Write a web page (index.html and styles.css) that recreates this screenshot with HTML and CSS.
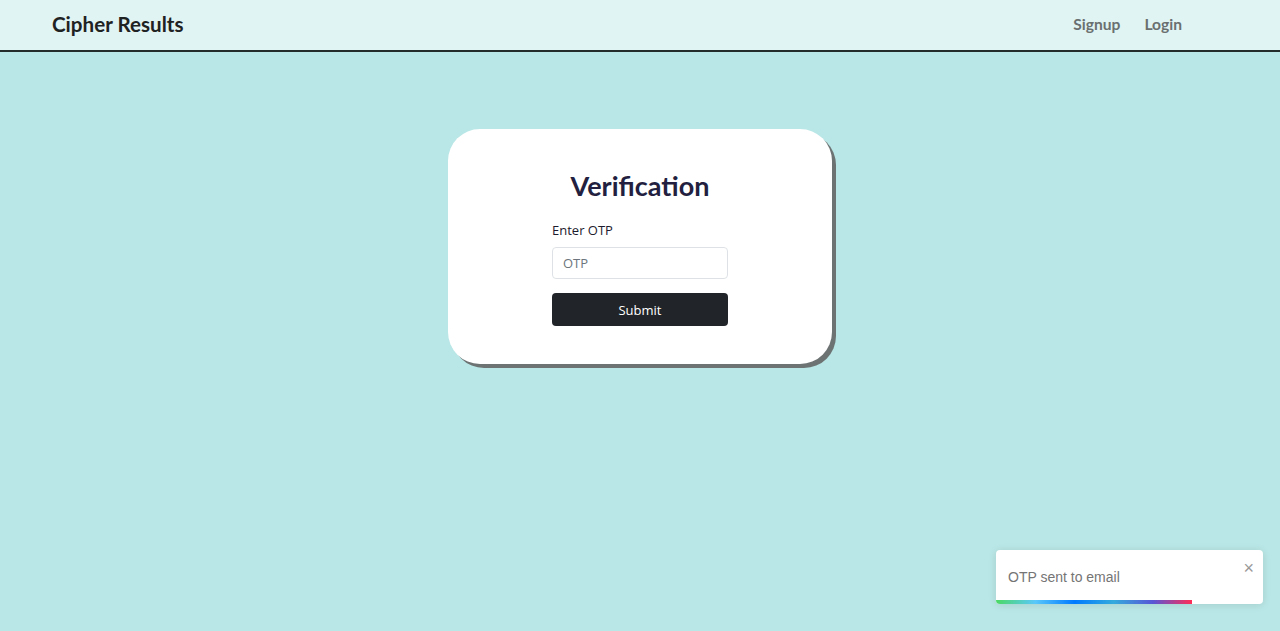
FILE: index.html
```html
<!DOCTYPE html>
<html>
<head>
<meta charset="utf-8">
<link rel="stylesheet" href="styles.css">
</head>
<body>
<nav class="navbar">
  <div class="brand">Cipher Results</div>
  <div class="links">
    <a class="link">Signup</a>
    <a class="link">Login</a>
  </div>
</nav>
<main class="main">
  <div class="card">
    <h1 class="title">Verification</h1>
    <form class="form">
      <label class="label">Enter OTP</label>
      <input class="input" placeholder="OTP">
      <button type="button" class="btn">Submit</button>
    </form>
  </div>
</main>
<div class="toast">
  <span class="toast-text">OTP sent to email</span>
  <span class="toast-close">×</span>
  <div class="toast-bar"></div>
</div>
</body>
</html>
```
FILE: styles.css
```css
* { box-sizing: border-box; }
html, body { margin: 0; height: 100%; }
body {
  background: #b9e6e6;
  font-family: "Open Sans", sans-serif;
  overflow: hidden;
}
.navbar {
  height: 52px;
  background: #e1f4f4;
  border-bottom: 2px solid #232b2b;
  display: flex;
  align-items: center;
  justify-content: space-between;
  padding: 0 98px 0 52px;
}
.brand {
  font-family: "Lato", sans-serif;
  font-weight: 700;
  font-size: 20.6px;
  color: #1f2222;
  margin-top: -3px;
}
.links { display: flex; gap: 24px; margin-top: -3px; }
.link {
  font-family: "Lato", sans-serif;
  font-weight: 700;
  font-size: 15.6px;
  color: #6a7070;
}
.main {
  display: flex;
  justify-content: center;
  padding-top: 77px;
}
.card {
  width: 384px;
  height: 235px;
  background: #fff;
  border-radius: 32px;
  box-shadow: 4px 4px 0 #6d7373;
  display: flex;
  flex-direction: column;
  align-items: center;
  padding-top: 40px;
}
.title {
  margin: 0;
  font-family: "Lato", sans-serif;
  font-weight: 700;
  font-size: 27px;
  color: #231f40;
  line-height: 34px;
}
.form {
  width: 176px;
  display: flex;
  flex-direction: column;
  margin-top: 18px;
}
.label {
  font-size: 13px;
  font-weight: 500;
  color: #1d1b2e;
  line-height: 18px;
  margin-bottom: 8px;
}
.input {
  height: 32px;
  border: 1px solid #dee2e6;
  border-radius: 4px;
  padding: 0 10px;
  font-family: "Open Sans", sans-serif;
  font-size: 13px;
  color: #6c757d;
  outline: none;
}
.input::placeholder { color: #6c757d; }
.btn {
  margin-top: 14px;
  height: 33px;
  background: #212529;
  color: #fff;
  border: 0;
  border-radius: 4px;
  font-family: "Open Sans", sans-serif;
  font-size: 13px;
}
.toast {
  position: absolute;
  left: 996px;
  top: 550px;
  width: 267px;
  height: 54px;
  background: #fff;
  border-radius: 4px;
  box-shadow: 0 1px 8px rgba(0,0,0,0.1);
  overflow: hidden;
}
.toast-text {
  position: absolute;
  left: 12px;
  top: 19px;
  font-family: "Liberation Sans", Arial, sans-serif;
  font-size: 14px;
  color: #757575;
}
.toast-close {
  position: absolute;
  right: 9px;
  top: 8px;
  font-family: "Liberation Sans", Arial, sans-serif;
  font-size: 18px;
  color: #999;
}
.toast-bar {
  position: absolute;
  left: 0;
  bottom: 0;
  width: 196px;
  height: 4px;
  background: linear-gradient(to right, #4cd964, #5ac8fa, #007aff, #34aadc, #5856d6, #ff2d55);
}
```
